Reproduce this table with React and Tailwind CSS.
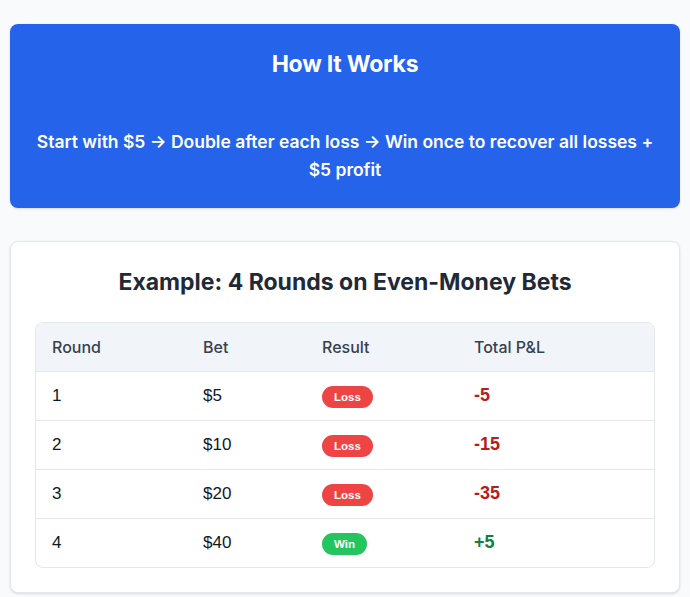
import React from 'react';

const rows = [
  { round: 1, bet: '$5', win: false, total: '-5' },
  { round: 2, bet: '$10', win: false, total: '-15' },
  { round: 3, bet: '$20', win: false, total: '-35' },
  { round: 4, bet: '$40', win: true, total: '+5' },
];

const App = () => {
  return (
    <div className="min-h-[597px] bg-[#f8fafc] px-[10px] pt-[24px] font-['Inter',sans-serif]">
      <div className="rounded-lg bg-[#2563eb] px-6 pt-[26px] pb-[24px] text-center text-white shadow-sm">
        <h2 className="text-[23px] leading-[28px] font-bold tracking-[-0.01em]">How It Works</h2>
        <p className="mt-[50px] text-[17.5px] leading-[28px] font-semibold">
          Start with $5 → Double after each loss → Win once to recover all losses + $5 profit
        </p>
      </div>

      <div className="mt-[33px] rounded-lg border border-[#e5e7eb] bg-white px-6 pt-[24px] pb-[24px] shadow-sm">
        <h3 className="text-center text-[23px] leading-[32px] font-bold text-[#1f2937]">
          Example: 4 Rounds on Even-Money Bets
        </h3>
        <div className="mt-[24px] overflow-hidden rounded-lg border border-[#e5e7eb]">
          <table className="w-full table-fixed border-collapse text-left">
            <thead className="bg-[#f1f5f9]">
              <tr>
                <th className="w-[151px] h-[48px] px-4 text-[16px] font-medium text-[#374151]">Round</th>
                <th className="w-[119px] px-4 text-[16px] font-medium text-[#374151]">Bet</th>
                <th className="w-[152px] px-4 text-[16px] font-medium text-[#374151]">Result</th>
                <th className="px-4 text-[16px] font-medium text-[#374151]">Total P&amp;L</th>
              </tr>
            </thead>
            <tbody className="font-['Liberation_Sans',Arial,sans-serif]">
              {rows.map((r) => (
                <tr key={r.round} className="border-t border-[#e5e7eb]">
                  <td className="h-[49px] px-4 text-[17px] text-[#111827]">{r.round}</td>
                  <td className="px-4 text-[17px] text-[#111827]">{r.bet}</td>
                  <td className="px-4">
                    <span
                      className={`inline-block rounded-full px-[12px] text-[11.5px] leading-[22px] font-bold text-white ${r.win ? 'bg-[#22c55e]' : 'bg-[#ef4444]'}`}
                    >
                      {r.win ? 'Win' : 'Loss'}
                    </span>
                  </td>
                  <td className={`px-4 text-[18px] font-bold ${r.win ? 'text-[#15803d]' : 'text-[#b91c1c]'}`}>
                    {r.total}
                  </td>
                </tr>
              ))}
            </tbody>
          </table>
        </div>
      </div>
    </div>
  );
};

export default App;
